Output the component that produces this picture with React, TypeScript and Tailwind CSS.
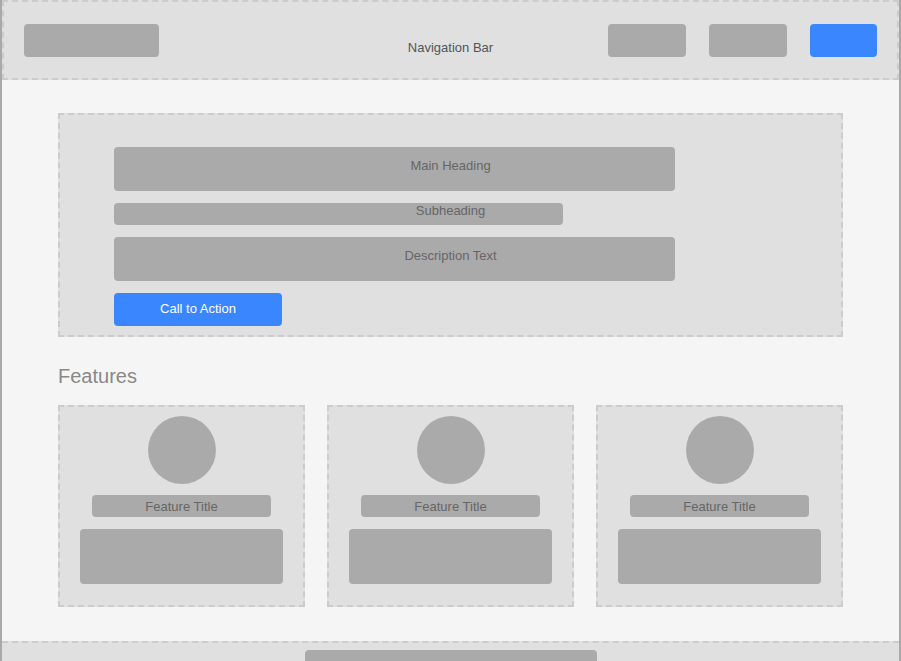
import React from "react";

function FeatureCard() {
  return (
    <div className="flex h-[202px] flex-col items-center border-2 border-dashed border-[#cccccc] bg-[#e0e0e0] px-[20px] pt-[9px] pb-[21px]">
      <div className="h-[68px] w-[68px] shrink-0 rounded-full bg-[#aaaaaa]" />
      <div className="mt-[11px] flex h-[22px] w-[179px] items-center justify-center rounded bg-[#aaaaaa] pt-[1px] text-[13px] leading-[15px] text-[#666666]">
        Feature Title
      </div>
      <div className="mt-[12px] h-[55px] w-full rounded bg-[#aaaaaa]" />
    </div>
  );
}

function HeroRow({ barW, barH, label }: { barW: string; barH: string; label: string }) {
  return (
    <div className="grid">
      <div className={`col-start-1 row-start-1 rounded bg-[#aaaaaa] ${barW} ${barH}`} />
      <div className="col-start-1 row-start-1 self-center -translate-y-[4px] text-center text-[13px] leading-[15px] text-[#666666]">
        {label}
      </div>
    </div>
  );
}

export default function App() {
  return (
    <div className="h-[661px] w-[901px] overflow-hidden border-x-2 border-[#a9a9a9] bg-[#f5f5f5] font-['Liberation_Sans',Arial,sans-serif]">
      <nav className="grid h-[80px] border-2 border-dashed border-[#cccccc] bg-[#e0e0e0]">
        <div className="col-start-1 row-start-1 flex items-center justify-between px-[20px]">
          <div className="h-[33px] w-[135px] rounded bg-[#aaaaaa]" />
          <div className="flex items-center gap-[23px]">
            <div className="h-[33px] w-[78px] rounded bg-[#aaaaaa]" />
            <div className="h-[33px] w-[78px] rounded bg-[#aaaaaa]" />
            <div className="h-[33px] w-[67px] rounded bg-[#3a86ff]" />
          </div>
        </div>
        <div className="col-start-1 row-start-1 pt-[38px] text-center text-[13px] leading-[15px] text-[#555555]">
          Navigation Bar
        </div>
      </nav>

      <main className="px-[56px] pt-[33px] pb-[34px]">
        <section className="flex h-[224px] flex-col gap-[12px] border-2 border-dashed border-[#cccccc] bg-[#e0e0e0] px-[54px] pt-[32px] pb-[9px]">
          <HeroRow barW="w-[561px]" barH="h-[44px]" label="Main Heading" />
          <HeroRow barW="w-[449px]" barH="h-[22px]" label="Subheading" />
          <HeroRow barW="w-[561px]" barH="h-[44px]" label="Description Text" />
          <button className="flex h-[33px] w-[168px] items-center justify-center rounded bg-[#3a86ff] pb-[3px] text-[13px] leading-[15px] text-white">
            Call to Action
          </button>
        </section>

        <h2 className="mt-[27px] text-[20px] leading-[24px] text-[#888888]">Features</h2>

        <div className="mt-[17px] grid grid-cols-3 gap-[22px]">
          <FeatureCard />
          <FeatureCard />
          <FeatureCard />
        </div>
      </main>

      <footer className="h-[60px] border-t-2 border-dashed border-[#cccccc] bg-[#e0e0e0] pt-[7px]">
        <div className="mx-auto h-[40px] w-[292px] rounded bg-[#aaaaaa]" />
      </footer>
    </div>
  );
}
